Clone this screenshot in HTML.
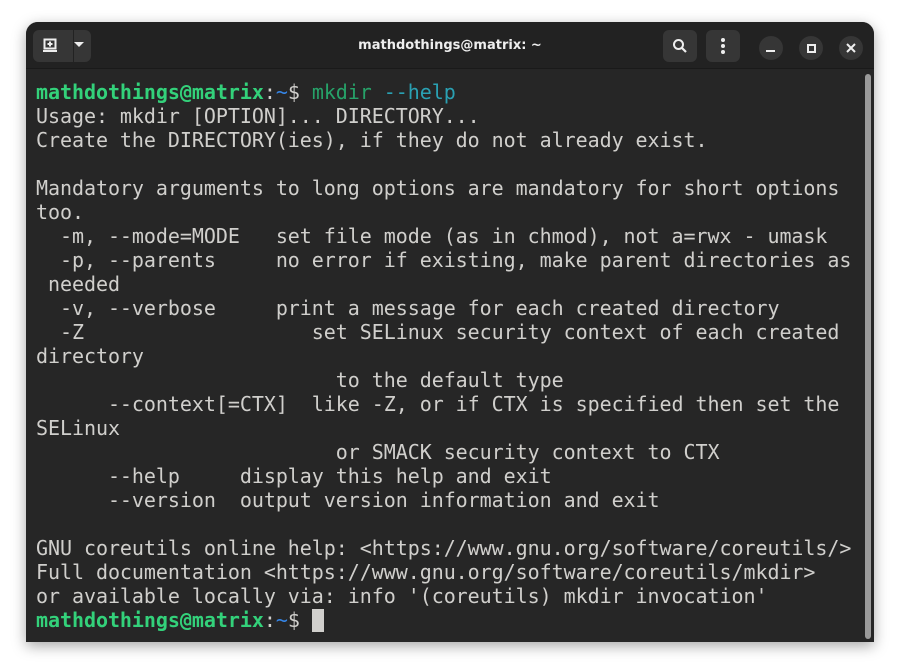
<!DOCTYPE html>
<html><head><style>
body{margin:0;width:900px;height:671px;background:#fff;position:relative;overflow:hidden}
.win{position:absolute;left:26px;top:22px;width:848px;height:620px;background:#262626;border-radius:12px 12px 0 0;box-shadow:0 4px 14px rgba(0,0,0,.35);overflow:hidden}
.hdr{position:absolute;left:0;top:0;width:848px;height:46px;background:#222;border-bottom:1px solid #1a1a1a}
.title{position:absolute;left:0;width:848px;top:16px;text-align:center;color:#eee;font:bold 13px "DejaVu Sans","Liberation Sans",sans-serif}
.btn{position:absolute;background:#363636;border-radius:6px;top:8px;height:32px}
.circ{position:absolute;top:14px;width:24px;height:24px;border-radius:50%;background:#363636}
pre{position:absolute;left:10px;top:58px;margin:0;font:20px/24px "DejaVu Sans Mono","Liberation Mono",monospace;letter-spacing:-0.05px;color:#d0cfcc}
.g{color:#33d17a;font-weight:bold}.b{color:#3584e4}.t{color:#26a269}.c{color:#2aa1b3}
.cur{display:inline-block;width:12px;height:23px;background:#d0cfcc;vertical-align:-5px}
.sb{position:absolute;left:839px;top:52px;width:6px;height:565px;background:#9a9a9a;border-radius:3px}
</style></head><body>
<div class="win">
<div class="hdr">
<div class="btn" style="left:7px;width:58px"></div>
<div style="position:absolute;left:47px;top:8px;width:1px;height:32px;background:#222"></div>
<svg style="position:absolute;left:16px;top:15px" width="16" height="16"><rect x="2.5" y="2.5" width="11" height="9" fill="none" stroke="#eee" stroke-width="2"/><path d="M8 4.5v5M5.5 7h5M1 14h14" stroke="#eee" stroke-width="2"/></svg>
<svg style="position:absolute;left:48px;top:20px" width="10" height="6"><path d="M0 0h10L5 5z" fill="#eee"/></svg>
<div class="title">mathdothings@matrix: ~</div>
<div class="btn" style="left:637px;width:34px"></div>
<svg style="position:absolute;left:646px;top:16px" width="16" height="16"><circle cx="6.5" cy="6.5" r="4.5" fill="none" stroke="#eee" stroke-width="2"/><path d="M10 10l4 4" stroke="#eee" stroke-width="2.2"/></svg>
<div class="btn" style="left:680px;width:34px"></div>
<svg style="position:absolute;left:693px;top:15px" width="8" height="20"><circle cx="4" cy="3" r="2" fill="#eee"/><circle cx="4" cy="9" r="2" fill="#eee"/><circle cx="4" cy="15" r="2" fill="#eee"/></svg>
<div class="circ" style="left:733px"></div><div style="position:absolute;left:740px;top:28px;width:9px;height:2px;background:#eee"></div>
<div class="circ" style="left:773px"></div><div style="position:absolute;left:781px;top:22px;width:5px;height:5px;border:2px solid #eee"></div>
<div class="circ" style="left:813px"></div>
<svg style="position:absolute;left:820px;top:21px" width="10" height="10"><path d="M1 1l8 8M9 1l-8 8" stroke="#eee" stroke-width="2"/></svg>
</div>
<pre><span class="g">mathdothings@matrix</span>:<span class="b">~</span>$ <span class="t">mkdir</span> <span class="c">--help</span>
Usage: mkdir [OPTION]... DIRECTORY...
Create the DIRECTORY(ies), if they do not already exist.

Mandatory arguments to long options are mandatory for short options
too.
  -m, --mode=MODE   set file mode (as in chmod), not a=rwx - umask
  -p, --parents     no error if existing, make parent directories as
 needed
  -v, --verbose     print a message for each created directory
  -Z                   set SELinux security context of each created
directory
                         to the default type
      --context[=CTX]  like -Z, or if CTX is specified then set the
SELinux
                         or SMACK security context to CTX
      --help     display this help and exit
      --version  output version information and exit

GNU coreutils online help: &lt;https://www.gnu.org/software/coreutils/&gt;
Full documentation &lt;https://www.gnu.org/software/coreutils/mkdir&gt;
or available locally via: info '(coreutils) mkdir invocation'
<span class="g">mathdothings@matrix</span>:<span class="b">~</span>$ <span class="cur"></span></pre>
<div class="sb"></div>
</div>
</body></html>
